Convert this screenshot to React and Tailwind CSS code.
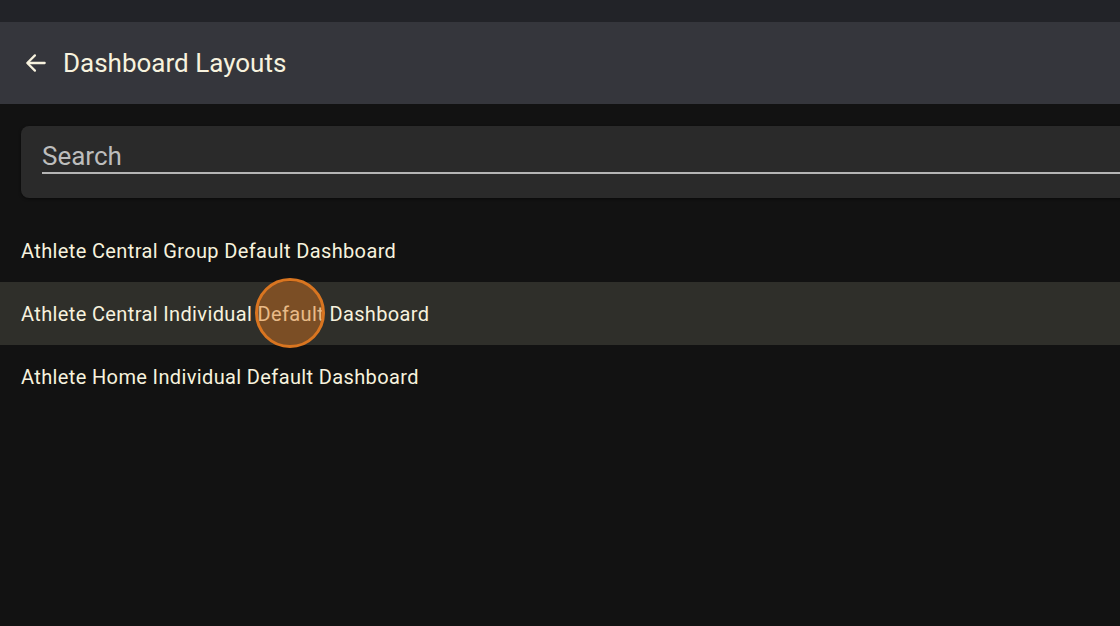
import React from "react";

export default function App() {
  const rows = [
    "Athlete Central Group Default Dashboard",
    "Athlete Central Individual Default Dashboard",
    "Athlete Home Individual Default Dashboard",
  ];
  return (
    <div className="w-[1120px] h-[626px] overflow-hidden bg-[#121212] flex flex-col" style={{ fontFamily: "Roboto, 'Noto Sans', sans-serif" }}>
      <div className="h-[22px] bg-[#222328] shrink-0" />
      <div className="h-[82px] bg-[#35363c] shrink-0 flex items-center pl-[23px]">
        <svg width="26" height="26" viewBox="0 0 24 24" fill="none" stroke="#f7f2de" strokeWidth="2.1" strokeLinecap="round" strokeLinejoin="round">
          <path d="M20 12H4.5" />
          <path d="M11 5l-7 7 7 7" />
        </svg>
        <span className="ml-[14px] text-[26px] text-[#f7f2de] leading-none">Dashboard Layouts</span>
      </div>
      <div className="pl-[21px] pt-[22px] shrink-0">
        <div className="w-[1200px] h-[72px] bg-[#2a2a2a] rounded-[8px] shadow-[0_1px_3px_rgba(0,0,0,0.5)] pl-[21px] pt-[14px]">
          <div className="border-b-2 border-[#b5b5b5] h-[34px] flex items-end pb-[3px]">
            <span className="text-[26px] leading-none text-[#bdbdbd]">Search</span>
          </div>
        </div>
      </div>
      <div className="mt-[21px] flex flex-col">
        {rows.map((r, i) => (
          <div key={i} className={`h-[63px] flex items-center pl-[21px] text-[20px] tracking-[0.37px] text-[#f7f2de] ${i === 1 ? "bg-[#2f2f2a] relative" : ""}`}>
            {r}
            {i === 1 && (
              <div className="absolute left-[255px] top-[-4px] w-[70px] h-[70px] rounded-full border-[3px] border-[#d97520] bg-[rgba(217,117,32,0.45)]" />
            )}
          </div>
        ))}
      </div>
    </div>
  );
}
